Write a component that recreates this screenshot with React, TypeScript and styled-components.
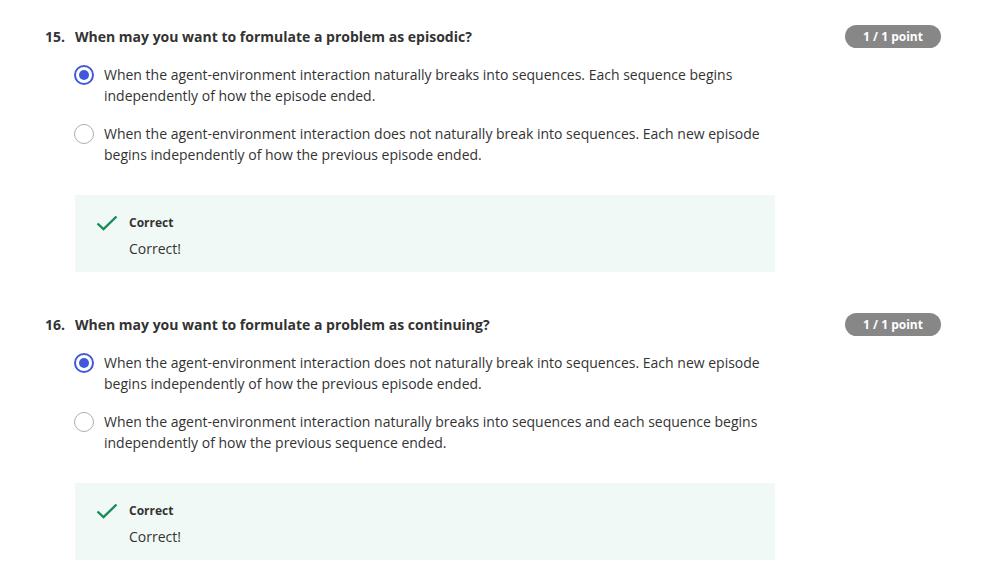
import styled, { createGlobalStyle } from "styled-components";

interface Option {
  text: string;
  selected: boolean;
}

interface Question {
  number: number;
  title: string;
  score: string;
  options: Option[];
  feedback: string;
}

const questions: Question[] = [
  {
    number: 15,
    title: "When may you want to formulate a problem as episodic?",
    score: "1 / 1 point",
    options: [
      {
        text: "When the agent-environment interaction naturally breaks into sequences. Each sequence begins independently of how the episode ended.",
        selected: true,
      },
      {
        text: "When the agent-environment interaction does not naturally break into sequences. Each new episode begins independently of how the previous episode ended.",
        selected: false,
      },
    ],
    feedback: "Correct!",
  },
  {
    number: 16,
    title: "When may you want to formulate a problem as continuing?",
    score: "1 / 1 point",
    options: [
      {
        text: "When the agent-environment interaction does not naturally break into sequences. Each new episode begins independently of how the previous episode ended.",
        selected: true,
      },
      {
        text: "When the agent-environment interaction naturally breaks into sequences and each sequence begins independently of how the previous sequence ended.",
        selected: false,
      },
    ],
    feedback: "Correct!",
  },
];

const GlobalStyle = createGlobalStyle`
  body {
    margin: 0;
    background: #ffffff;
    font-family: "Open Sans", "Liberation Sans", sans-serif;
    color: #333333;
  }
`;

export default function App() {
  return (
    <>
      <GlobalStyle />
      <Page>
        {questions.map((q) => (
          <QuestionBlock key={q.number}>
            <Header>
              <Number>{q.number}.</Number>
              <Title>{q.title}</Title>
              <Badge>{q.score}</Badge>
            </Header>
            <Options>
              {q.options.map((opt, i) => (
                <OptionRow key={i}>
                  <Radio selected={opt.selected} />
                  <OptionText>{opt.text}</OptionText>
                </OptionRow>
              ))}
            </Options>
            <Feedback>
              <CheckIcon width="22" height="16" viewBox="0 0 22 16">
                <polyline
                  points="1.5,8.5 7.5,14.2 20.5,1.5"
                  fill="none"
                  stroke="#1b8a57"
                  strokeWidth="2.4"
                />
              </CheckIcon>
              <FeedbackBody>
                <FeedbackLabel>Correct</FeedbackLabel>
                <FeedbackText>{q.feedback}</FeedbackText>
              </FeedbackBody>
            </Feedback>
          </QuestionBlock>
        ))}
      </Page>
    </>
  );
}

const Page = styled.div`
  padding: 25px 56px 0 45px;
  display: flex;
  flex-direction: column;
  gap: 41px;
`;

const QuestionBlock = styled.section`
  display: flex;
  flex-direction: column;
`;

const Header = styled.div`
  display: flex;
  align-items: center;
  height: 23px;
  font-size: 14px;
  font-weight: 700;
  color: #333333;
`;

const Number = styled.span`
  width: 30px;
`;

const Title = styled.h3`
  flex: 1;
  margin: 0;
  font-size: 14px;
  font-weight: 700;
`;

const Badge = styled.span`
  width: 96px;
  height: 23px;
  border-radius: 12px;
  background: #878787;
  color: #ffffff;
  font-size: 12px;
  font-weight: 700;
  display: flex;
  align-items: center;
  justify-content: center;
`;

const Options = styled.div`
  display: flex;
  flex-direction: column;
  gap: 17px;
  margin: 16px 0 0 29px;
  width: 700px;
`;

const OptionRow = styled.label`
  display: flex;
  align-items: flex-start;
  gap: 10px;
`;

const Radio = styled.span<{ selected: boolean }>`
  flex: none;
  box-sizing: border-box;
  width: 20px;
  height: 20px;
  margin-top: 0.5px;
  border-radius: 50%;
  border: ${(p) => (p.selected ? "2px solid #4058d9" : "1.5px solid #aeaeae")};
  display: flex;
  align-items: center;
  justify-content: center;
  &::after {
    content: "";
    display: ${(p) => (p.selected ? "block" : "none")};
    width: 10px;
    height: 10px;
    border-radius: 50%;
    background: #4058d9;
  }
`;

const OptionText = styled.span`
  font-size: 14px;
  line-height: 21px;
  color: #333333;
`;

const Feedback = styled.div`
  margin: 30px 0 0 30px;
  width: 700px;
  box-sizing: border-box;
  background: #f1f9f6;
  padding: 20px 0 13px 21px;
  display: flex;
  align-items: flex-start;
  gap: 11px;
`;

const CheckIcon = styled.svg`
  flex: none;
`;

const FeedbackBody = styled.div`
  display: flex;
  flex-direction: column;
  gap: 7px;
`;

const FeedbackLabel = styled.span`
  font-size: 12px;
  line-height: 16px;
  font-weight: 700;
  color: #333333;
`;

const FeedbackText = styled.span`
  font-size: 14px;
  line-height: 21px;
  color: #333333;
`;
